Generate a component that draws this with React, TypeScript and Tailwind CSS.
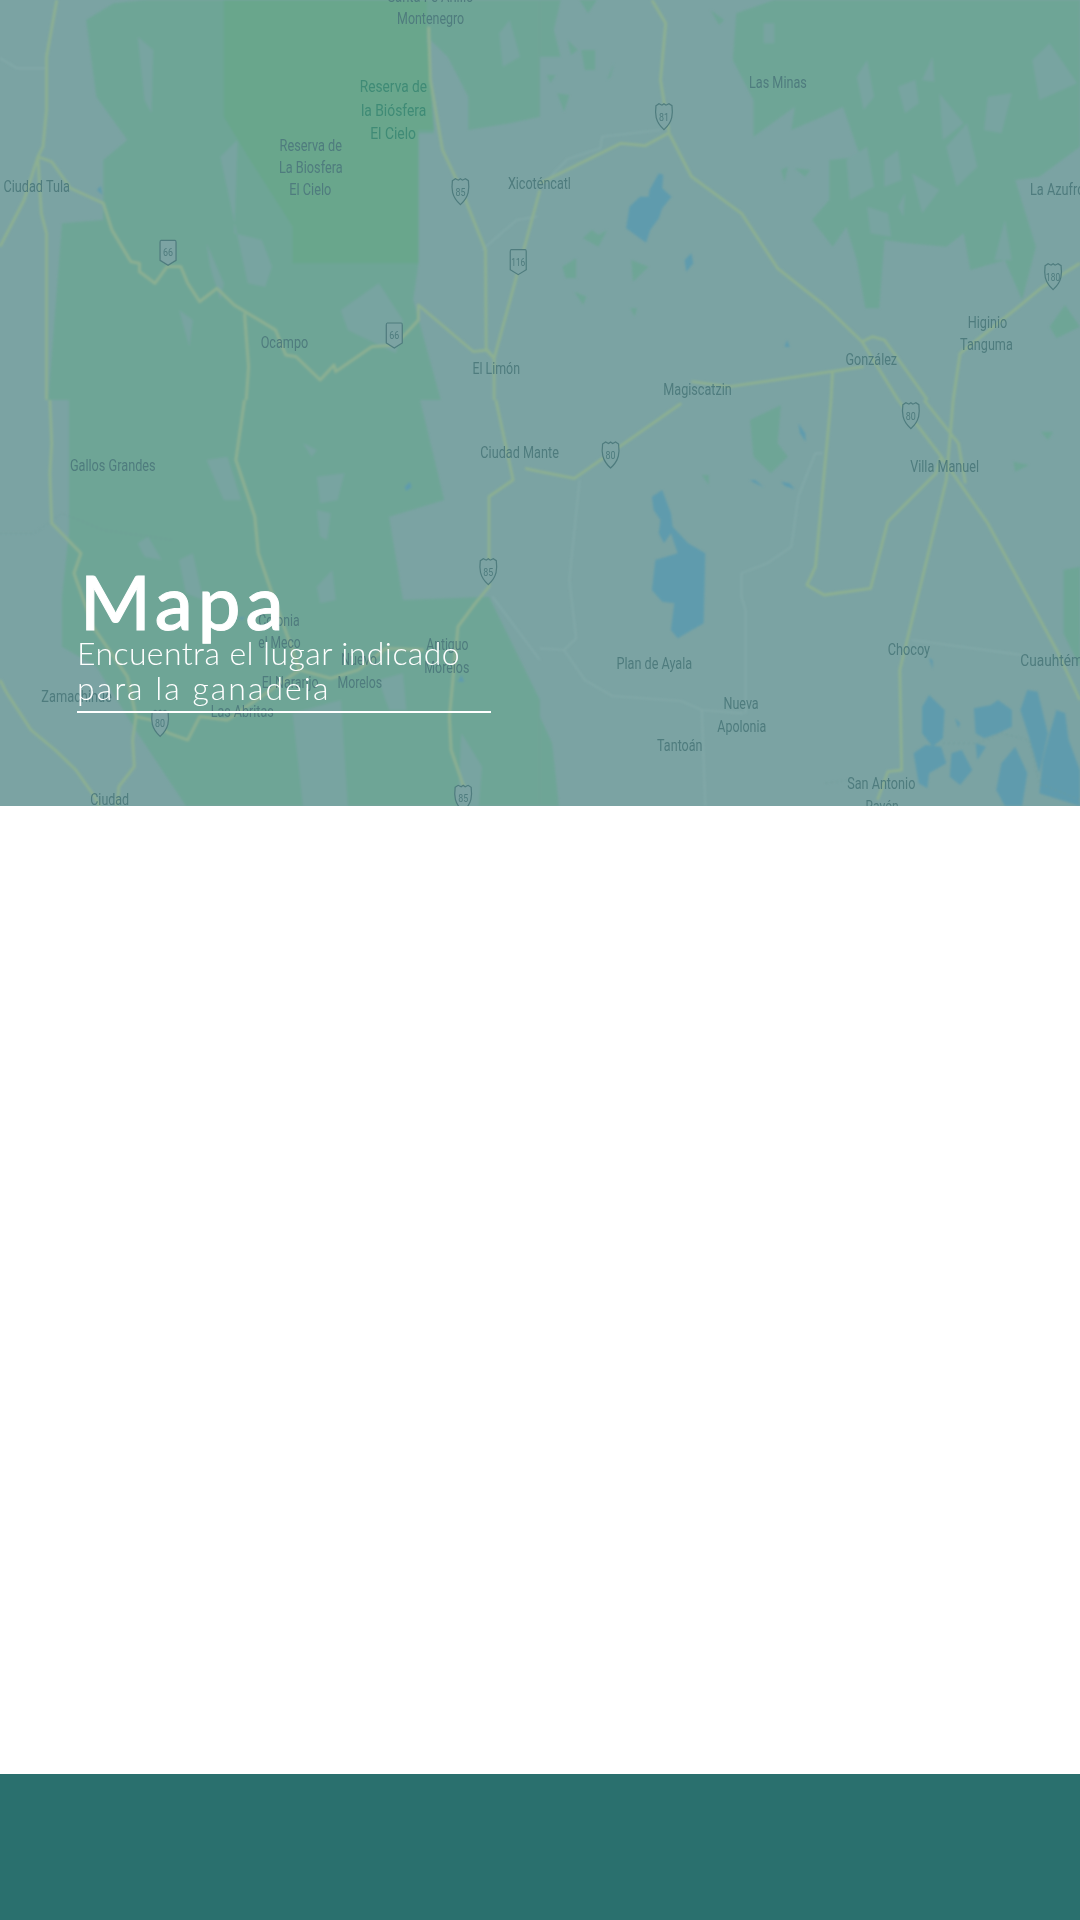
const OX = { A: [0, 0], B: [540, 0], C: [0, 400], D: [540, 400] } as const;
type T = keyof typeof OX;
const px = (t: T, x: number) => OX[t][0] + x / 2.904;
const py = (t: T, y: number) => OX[t][1] + y / 3;
const P = (t: T, s: string) =>
  s.trim().split(/\s+/).map((p) => {
    const [x, y] = p.split(",").map(Number);
    return `${px(t, x).toFixed(1)},${py(t, y).toFixed(1)}`;
  }).join(" ");

const BASE = "#7ba3a3";
const GREEN = "#6ea596";
const DEEP = "#69a68c";
const WATER = "#5f9bad";
const ROAD = "#8db092";
const PALE = "#86acab";

const greens: [T, string][] = [
  ["A", "250,60 330,10 420,0 1240,0 1240,120 1260,400 1215,400 1215,790 1200,900 1280,1200 140,1200 180,670 300,660 300,480 370,420 280,290"],
  ["A", "1250,120 1220,0 1568,0 1568,350 1480,370 1360,390 1360,290 1300,170"],
  ["B", "0,0 60,0 40,90 60,170 0,170"],
  ["B", "115,0 165,0 140,40"],
  ["B", "80,120 110,150 90,165"],
  ["B", "120,150 160,150 160,210 130,210"],
  ["B", "50,280 85,285 70,335"],
  ["B", "20,225 45,225 30,250"],
  ["B", "195,240 215,190 205,230"],
  ["B", "495,30 535,60 520,75"],
  ["B", "125,715 150,690 170,705 195,690 170,740"],
  ["B", "65,800 105,775 105,835 75,835"],
  ["B", "265,780 315,800 270,845"],
  ["B", "100,875 135,890 125,915"],
  ["B", "262,925 282,925 275,950"],
  ["B", "560,180 570,40 680,0 1568,0 1568,440 1450,530 1380,540 1440,740 1400,900 1350,780 1250,810 1230,700 1180,740 1070,730 1000,720 985,925 945,925 920,780 890,680 850,740 790,660 840,600 840,480 930,470 880,320 820,350 730,390 740,320 620,410 620,300"],
  ["B", "700,510 720,500 710,545"],
  ["B", "740,505 785,510 770,530"],
  ["B", "1480,980 1525,915 1568,980 1500,1015"],
  ["C", "200,0 1220,0 1290,300 1130,350 1170,600 1420,590 1568,900 1568,1218 540,1218 400,1000 280,800 180,740 180,590 200,400"],
  ["D", "0,950 35,1030 55,1218 0,1218"],
  ["D", "610,60 700,15 690,130 720,170 670,220 620,170"],
  ["D", "470,225 490,225 490,255"],
  ["D", "1375,185 1420,195 1380,215"],
  ["D", "1455,95 1490,95 1475,120"],
  ["D", "1520,510 1568,500 1568,800 1520,700"],
];
const deep: [T, string][] = [
  ["A", "650,0 1240,0 1240,120 1260,390 1215,390 1215,790 850,790 850,680 720,470 650,350"],
];
const holes: [T, string][] = [
  ["A", "400,110 445,150 440,340 420,300"],
  ["A", "640,470 690,420 680,700 760,720 790,800 770,860 720,850 690,710"],
  ["A", "600,730 650,850 640,900 610,800"],
  ["A", "990,930 1100,850 1170,960 1150,1060 1010,990"],
  ["A", "1450,100 1480,60 1510,170 1460,200"],
  ["A", "520,930 560,960 550,1040"],
  ["B", "650,70 680,70 680,130 650,130"],
  ["B", "1040,260 1090,240 1100,310 1060,340"],
  ["B", "1110,240 1140,170 1145,245"],
  ["B", "890,480 950,440 970,560 900,600"],
  ["B", "920,230 950,180 970,290 940,330"],
  ["B", "1160,280 1230,370 1170,420"],
  ["B", "1300,290 1370,280 1340,400 1290,390"],
  ["B", "1000,480 1040,450 1050,540 1000,560"],
  ["B", "1180,440 1240,370 1270,500 1210,560"],
  ["B", "1080,520 1160,570 1110,640"],
  ["B", "950,620 1010,640 1020,710 960,700"],
  ["B", "1430,180 1480,130 1560,250 1450,300"],
  ["B", "1320,780 1350,660 1370,780"],
  ["B", "1040,620 1060,580 1055,650"],
  ["C", "600,180 660,170 700,300 650,300"],
  ["C", "880,130 920,150 905,170"],
  ["C", "920,230 1000,220 980,300 930,310"],
  ["C", "920,330 960,340 950,420 930,410"],
  ["C", "520,480 560,460 590,600 540,580"],
  ["C", "400,430 430,410 470,480 420,470"],
  ["C", "920,560 965,510 975,600 930,610"],
  ["C", "850,940 990,900 1010,1218 880,1218"],
  ["C", "1100,840 1170,820 1180,930 1130,930"],
  ["C", "1340,1000 1400,1100 1390,1218 1330,1218"],
];
const water: [T, string][] = [
  ["A", "282,570 292,558 297,585"],
  ["B", "250,685 260,620 290,590 315,590 318,570 345,520 358,525 355,565 382,590 355,625 345,655 320,690 308,728"],
  ["B", "420,780 440,760 445,790 425,815"],
  ["B", "710,1040 718,1020 725,1042"],
  ["C", "1175,262 1190,245 1195,262 1180,272"],
  ["C", "690,655 710,650 705,660"],
  ["C", "1330,845 1340,825 1348,845"],
  ["D", "325,290 355,270 380,340 385,380 430,430 480,460 475,670 400,715 380,690 390,610 355,605 325,570 335,480 400,460 380,400 360,430 345,400 350,360 330,330"],
  ["D", "750,70 770,100 772,125 755,100"],
  ["D", "608,240 625,240 650,262 625,250"],
  ["D", "700,245 725,250 740,268 712,258"],
  ["D", "1130,775 1140,780 1140,808"],
  ["D", "1110,920 1130,885 1175,930 1170,1015 1140,1040 1110,1000"],
  ["D", "1085,1060 1120,1035 1165,1040 1180,1090 1130,1120 1125,1165 1100,1150"],
  ["D", "1195,1060 1225,1050 1255,1110 1220,1155 1190,1130"],
  ["D", "1260,925 1310,915 1330,900 1370,930 1370,980 1330,1000 1290,1015 1265,1000"],
  ["D", "1265,1030 1295,1040 1270,1080"],
  ["D", "1395,930 1415,870 1445,875 1475,1000 1450,1120 1420,1010"],
  ["D", "1480,1000 1500,930 1525,940 1535,1020 1568,1110 1568,1218 1450,1180 1460,1080"],
  ["D", "1340,1090 1380,1040 1415,1120 1400,1218 1350,1218 1325,1170"],
  ["D", "1205,955 1220,970 1215,985"],
];
const roads: [T, string][] = [
  ["A", "165,0 135,170 135,330 125,440 110,470 70,600 0,740"],
  ["A", "110,470 120,640 135,700 135,1200"],
  ["A", "110,470 150,485 205,565 300,610 325,690 380,785 405,790 405,815 450,850 485,800 525,800 545,850 580,905 630,865 680,915 800,990 830,1065 860,1070 930,1140 970,1095 975,1115 1080,1040 1145,1035 1180,1000 1215,960 1215,915 1375,1055 1415,1050 1435,1075"],
  ["A", "710,940 722,1100 715,1200"],
  ["A", "1245,80 1250,240 1285,450 1340,570 1410,750 1412,1050 1435,1075 1435,1200"],
  ["A", "1435,1075 1500,830 1568,570"],
  ["B", "0,550 235,430 305,437 372,400"],
  ["B", "325,0 365,70 350,240 375,400 440,530 585,640 690,805 830,920 935,1025 1040,1200"],
  ["B", "935,1025 965,1010 1000,1020 1125,1200"],
  ["B", "1568,790 1460,860 1390,920 1220,1060 1200,1200"],
  ["B", "440,1145 550,1160 940,1100"],
  ["B", "850,1110 845,1200"],
  ["C", "145,0 150,130 145,220 150,370 235,460 215,520 270,680 370,830 395,950 385,1020 390,1100 345,1160 340,1218"],
  ["C", "0,840 20,880 90,990 160,1050 220,1110 275,1190 290,1218"],
  ["C", "395,950 440,960 490,1000 545,1020 580,950 660,960 870,810 960,835 1040,810 1120,745 1230,750"],
  ["C", "710,0 685,180 740,350 750,460 790,580 870,810"],
  ["C", "1440,0 1490,240 1420,290 1420,560 1380,610 1330,680 1305,950 1310,1050 1350,1170 1350,1218"],
  ["C", "1525,205 1568,215"],
  ["D", "410,10 100,235 0,215"],
  ["D", "845,0 800,500 775,555 825,585 960,565 1010,365 1150,220 1165,170"],
  ["D", "1040,0 1165,170 1300,370 1500,750 1568,900"],
  ["D", "1115,0 1215,130 1235,250"],
  ["D", "1200,0 1180,240 1045,810 1050,1110 1010,1115 980,1200"],
];
const pale: [T, string][] = [
  ["D", "115,240 85,540 105,715 70,750 0,745"],
  ["D", "70,750 130,840 210,888 410,903 470,930 590,940"],
  ["D", "470,930 480,1218"],
  ["D", "597,940 597,630 585,590 585,520 660,490 730,440 750,290 780,210 800,160 820,160"],
  ["D", "1080,720 1400,765"],
  ["B", "30,530 80,478 175,445 180,410 350,390"],
  ["A", "0,175 50,205 135,205"],
  ["A", "1400,750 1500,660 1560,650"],
  ["C", "1430,590 1568,780"],
];
const dashes: [T, string][] = [
  ["D", "1170,1030 1270,1030 1340,1000 1420,1020 1450,1150 1568,1200"],
  ["D", "830,1150 900,1140"],
  ["C", "0,400 100,400 180,340 300,390 500,420"],
];

const labels: [T, string, number, number, number, string?][] = [
  ["A", "Santa Fe Anillo", 1125, 1375, 5],
  ["A", "Montenegro", 1153, 1348, 72],
  ["A", "Reserva de", 1045, 1240, 275, "#3f8b76"],
  ["A", "la Biósfera", 1048, 1238, 347, "#3f8b76"],
  ["A", "El Cielo", 1075, 1208, 418, "#3f8b76"],
  ["A", "Reserva de", 812, 993, 452],
  ["A", "La Biosfera", 810, 995, 518],
  ["A", "El Cielo", 840, 962, 585],
  ["A", "Ciudad Tula", 10, 203, 575],
  ["A", "Ocampo", 757, 895, 1043],
  ["A", "El Limón", 1372, 1510, 1123],
  ["A", "Xicoténcatl", 1475, 1658, 568],
  ["B", "Las Minas", 607, 775, 265],
  ["B", "Magiscatzin", 358, 557, 1185],
  ["B", "González", 887, 1037, 1095],
  ["B", "Higinio", 1242, 1357, 985],
  ["B", "Tanguma", 1220, 1373, 1050],
  ["B", "La Azufrosa", 1423, 1620, 585],
  ["C", "Gallos Grandes", 203, 452, 212],
  ["C", "Ciudad Mante", 1395, 1623, 175],
  ["C", "Zamachihue", 120, 325, 905],
  ["C", "Colonia", 750, 870, 678],
  ["C", "el Meco", 750, 873, 745],
  ["C", "El Naranjo", 760, 925, 865],
  ["C", "Nuevo", 990, 1095, 795],
  ["C", "Morelos", 980, 1110, 865],
  ["C", "Antiguo", 1238, 1360, 750],
  ["C", "Morelos", 1232, 1363, 818],
  ["C", "Las Abritas", 612, 795, 950],
  ["C", "Ciudad", 262, 375, 1215],
  ["D", "Plan de Ayala", 222, 442, 808],
  ["D", "Nueva", 533, 635, 928],
  ["D", "Apolonia", 515, 657, 995],
  ["D", "Tantoán", 340, 472, 1052],
  ["D", "San Antonio", 892, 1090, 1168],
  ["D", "Rayón", 945, 1042, 1235],
  ["D", "Chocoy", 1010, 1133, 765],
  ["D", "Cuauhtémoc", 1395, 1620, 798],
  ["D", "Villa Manuel", 1075, 1275, 217],
];

const shields: [T, string, number, number, boolean][] = [
  ["A", "66", 488, 757, false],
  ["A", "66", 1145, 1005, false],
  ["A", "85", 1337, 575, true],
  ["A", "116", 1505, 785, false],
  ["B", "81", 360, 350, true],
  ["B", "180", 1490, 830, true],
  ["C", "85", 1418, 515, true],
  ["C", "80", 465, 970, true],
  ["C", "85", 1345, 1195, true],
  ["D", "80", 205, 165, true],
  ["D", "80", 1077, 47, true],
];

function MapArt() {
  return (
    <svg className="absolute inset-0 h-full w-full" viewBox="0 0 1080 806" preserveAspectRatio="none">
      <defs>
        <filter id="soft" x="-2%" y="-2%" width="104%" height="104%">
          <feGaussianBlur stdDeviation="0.8" />
        </filter>
        <filter id="softer" x="-2%" y="-2%" width="104%" height="104%">
          <feGaussianBlur stdDeviation="0.3" />
        </filter>
      </defs>
      <rect width="1080" height="806" fill={BASE} />
      <g filter="url(#soft)">
        {greens.map(([t, s], i) => <polygon key={i} points={P(t, s)} fill={GREEN} />)}
        {deep.map(([t, s], i) => <polygon key={i} points={P(t, s)} fill={DEEP} />)}
        {holes.map(([t, s], i) => <polygon key={i} points={P(t, s)} fill="#78a4a1" />)}
        {water.map(([t, s], i) => <polygon key={i} points={P(t, s)} fill={WATER} />)}
        {pale.map(([t, s], i) => <polyline key={i} points={P(t, s)} fill="none" stroke={PALE} strokeWidth="1.2" />)}
        {dashes.map(([t, s], i) => <polyline key={i} points={P(t, s)} fill="none" stroke="#6f9a98" strokeWidth="1" strokeDasharray="2 3" />)}
        {roads.map(([t, s], i) => (
          <polyline key={i} points={P(t, s)} fill="none" stroke={ROAD} strokeWidth="2.8" strokeLinejoin="round" />
        ))}
      </g>
      <g filter="url(#softer)">
        {shields.map(([t, n, x, y, notch], i) => {
          const cx = px(t, x);
          const cy = py(t, y);
          const d = notch
            ? "M-8,-11 L-5,-13 L-2,-11.5 L0,-13 L2,-11.5 L5,-13 L8,-11 C9,-3 9,5 0,13 C-9,5 -9,-3 -8,-11 Z"
            : "M-7,-12 L7,-12 C8,-12 8,-11 8,-10 L8,8 L0,13 L-8,8 L-8,-10 C-8,-11 -8,-12 -7,-12 Z";
          return (
            <g key={i} transform={`translate(${cx} ${cy})`}>
              <path d={d} fill={BASE} stroke="#4f7c7e" strokeWidth="1.2" />
              <text textAnchor="middle" y="4" fontSize="11" fontFamily="Roboto, sans-serif" fill="#4f7c7e" textLength={n.length > 2 ? 14 : 10} lengthAdjust="spacingAndGlyphs">{n}</text>
            </g>
          );
        })}
        {labels.map(([t, s, a, b, y, c], i) => (
          <text
            key={i}
            x={px(t, a)}
            y={py(t, y)}
            fontSize="16"
            fontFamily="Roboto, sans-serif"
            fill={c ?? "#4f7c7e"}
            textLength={(b - a) / 2.904}
            lengthAdjust="spacingAndGlyphs"
          >
            {s}
          </text>
        ))}
      </g>
    </svg>
  );
}

export default function App() {
  return (
    <div className="flex h-[1920px] w-[1080px] flex-col bg-white">
      <section className="relative h-[806px] shrink-0 overflow-hidden">
        <MapArt />
        <div className="relative flex h-full flex-col justify-end pb-[93px] pl-[77px]">
          <div className="w-[414px] border-b-2 border-white text-white font-['Lato',sans-serif]">
            <h1 className="pl-[3px] text-[76px] font-medium leading-[70px] tracking-[5px] [-webkit-text-stroke:1px_white]">Mapa</h1>
            <p className="-mt-px pb-[6px] text-[32px] font-light leading-[35px]">
              <span className="tracking-[0.4px]">Encuentra el lugar indicado</span>
              <br />
              <span className="tracking-[2px]">para la ganadeia</span>
            </p>
          </div>
        </div>
      </section>
      <div className="flex-1" />
      <footer className="h-[146px] shrink-0 bg-[#2a706e]" />
    </div>
  );
}
